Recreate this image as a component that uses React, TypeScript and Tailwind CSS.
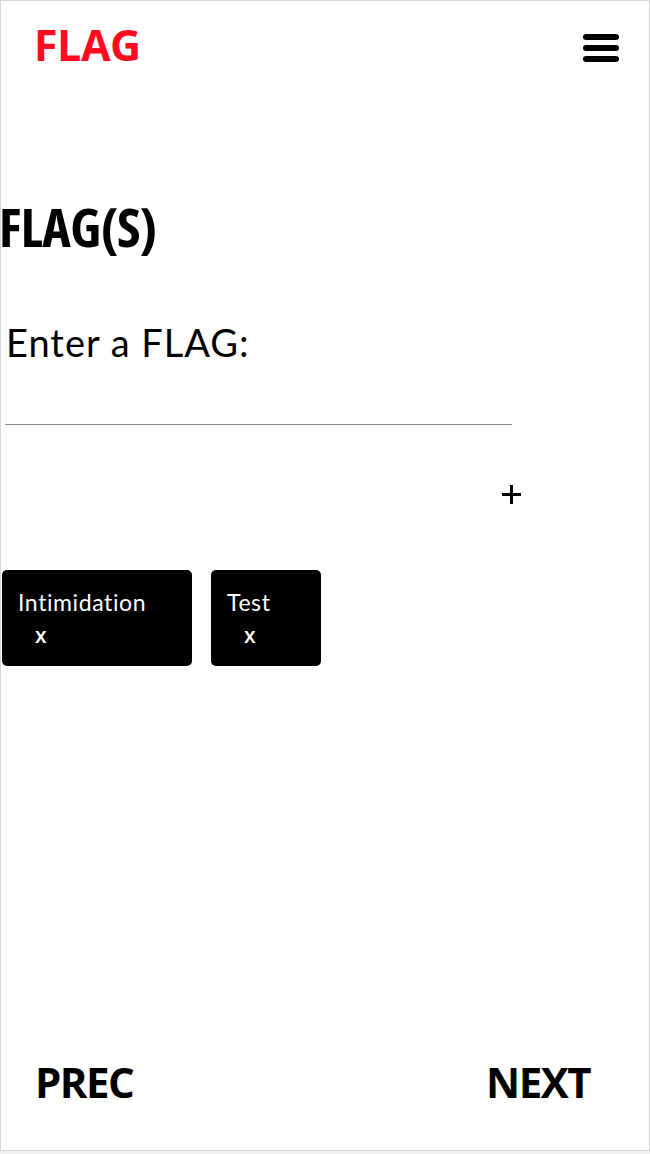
import React from "react";

export default function App() {
  const chips = [
    { label: "Intimidation", w: "w-[190px]" },
    { label: "Test", w: "w-[110px]" },
  ];
  return (
    <div className="w-[650px] h-[1154px] bg-[#f0f0f0]">
      <div className="w-[650px] h-[1151px] bg-white border border-[#d6d6d6] relative flex flex-col">
        <header className="flex items-start justify-between pl-[33px] pr-[30px] pt-[20px] h-[97px]">
          <div
            className="text-[#ff0a1e] text-[43px] font-bold leading-[48px] tracking-[-0.5px]"
            style={{ fontFamily: '"Open Sans", sans-serif', fontStretch: "96%" }}
          >
            FLAG
          </div>
          <div className="flex flex-col gap-[5px] pt-[13px]">
            <span className="block w-[36px] h-[6px] rounded-full bg-black" />
            <span className="block w-[36px] h-[6px] rounded-full bg-black" />
            <span className="block w-[36px] h-[6px] rounded-full bg-black" />
          </div>
        </header>

        <h1
          className="mt-[96px] -ml-[2px] text-[54px] font-bold leading-[64px] text-black tracking-[-0.5px]"
          style={{ fontFamily: '"Open Sans", sans-serif', fontStretch: "75%" }}
        >
          FLAG(S)
        </h1>

        <label
          className="mt-[62px] ml-[5px] text-[38px] leading-[44px] text-black tracking-[1px]"
          style={{ fontFamily: 'Lato, "Open Sans", sans-serif' }}
        >
          Enter a FLAG:
        </label>

        <div className="mt-[60px] ml-[4px] w-[507px] h-[1px] bg-[#8a8a8a]" />

        <div className="mt-[59px] ml-[500px] w-[22px] h-[22px] relative">
          <span className="absolute left-[1px] top-[9px] w-[19px] h-[3px] bg-black" />
          <span className="absolute left-[9px] top-[1px] w-[3px] h-[19px] bg-black" />
        </div>

        <div className="mt-[64px] ml-[1px] flex gap-[19px]">
          {chips.map((c) => (
            <div
              key={c.label}
              className={`${c.w} h-[96px] bg-black rounded-[5px] pl-[16px] pt-[18px] text-white`}
            >
              <div
                className="text-[23px] leading-[28px] tracking-[0.6px]"
                style={{ fontFamily: 'Lato, "Open Sans", sans-serif' }}
              >
                {c.label}
              </div>
              <div
                className="ml-[17px] mt-[7px] text-[21px] leading-[24px] font-semibold"
                style={{ fontFamily: '"Open Sans", sans-serif' }}
              >
                x
              </div>
            </div>
          ))}
        </div>

        <footer className="mt-auto mb-[44px] flex justify-between pl-[34px] pr-[59px]">
          <span
            className="text-[42px] font-bold leading-[48px] tracking-[-1.5px]"
            style={{ fontFamily: '"Open Sans", sans-serif', fontStretch: "92%" }}
          >
            PREC
          </span>
          <span
            className="text-[42px] font-bold leading-[48px] tracking-[-1.5px]"
            style={{ fontFamily: '"Open Sans", sans-serif', fontStretch: "92%" }}
          >
            NEXT
          </span>
        </footer>
      </div>
    </div>
  );
}
